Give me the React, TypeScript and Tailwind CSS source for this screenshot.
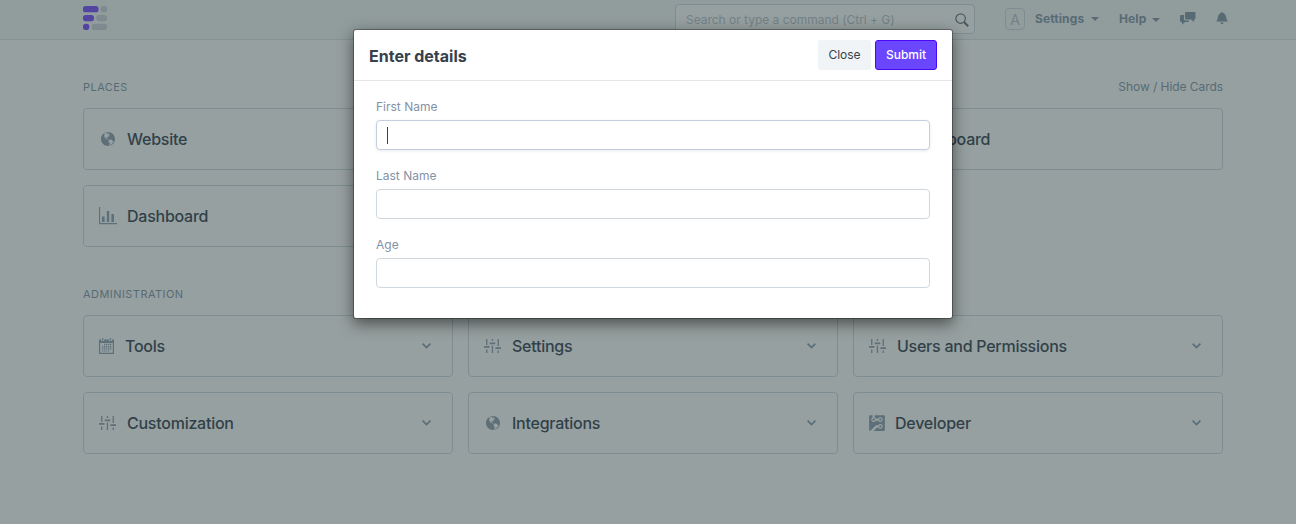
import React from 'react';

type IconProps = { className?: string };

const Globe = ({ className = '' }: IconProps) => (
  <svg className={`ml-[2px] h-4 w-[14px] ${className}`} viewBox="0 0 14 16" fill="currentColor">
    <path d="M7 1C3.14 1 0 4.14 0 8s3.14 7 7 7c.48 0 .94-.05 1.38-.14-.17-.08-.2-.73-.02-1.09.19-.41.81-1.45.2-1.8-.61-.35-.44-.5-.81-.91-.37-.41-.22-.47-.25-.58-.08-.34.36-.89.39-.94.02-.06.02-.27 0-.33 0-.08-.27-.22-.34-.23-.06 0-.11.11-.2.13-.09.02-.5-.25-.59-.33-.09-.08-.14-.23-.27-.34-.13-.13-.14-.03-.33-.11s-.8-.31-1.28-.48c-.48-.19-.52-.47-.52-.66-.02-.2-.3-.47-.42-.67-.14-.2-.16-.47-.2-.41-.04.06.25.78.2.81-.05.02-.16-.2-.3-.38-.14-.19.14-.09-.3-.95s.14-1.3.17-1.75c.03-.45.38.17.19-.13-.19-.3 0-.89-.14-1.11-.13-.22-.88.25-.88.25.02-.22.69-.58 1.16-.92.47-.34.78-.06 1.16.05.39.13.41.09.28-.05-.13-.13.06-.17.36-.13.28.05.38.41.83.36.47-.03.05.09.11.22s-.06.11-.38.3c-.3.2.02.22.55.61s.38-.25.31-.55c-.07-.3.39-.06.39-.06.33.22.27.02.5.08.23.06.91.64.91.64-.83.44-.31.48-.17.59.14.11-.28.3-.28.3-.17-.17-.19.02-.3.08-.11.06-.02.22-.02.22-.56.09-.44.69-.42.83 0 .14-.38.36-.47.58-.09.2.25.64.06.66-.19.03-.34-.66-1.31-.41-.3.08-.94.41-.59 1.08.36.69.92-.19 1.11-.09.19.1-.06.53-.02.55.04.02.53.02.56.61.03.59.77.53.92.55.17 0 .7-.44.77-.45.06-.03.38-.28 1.03.09.66.36.98.31 1.2.47.22.16.08.47.28.58.2.11 1.06-.03 1.28.31.22.34-.88 2.09-1.22 2.28-.34.19-.48.64-.84.92s-.81.64-1.27.91c-.41.23-.47.66-.66.8 3.14-.7 5.48-3.5 5.48-6.84 0-3.86-3.14-7-7-7L7 1z" />
  </svg>
);

const Chart = () => (
  <svg className="h-[18px] w-[18px]" viewBox="0 0 18 18" fill="currentColor">
    <path d="M0 0h1.1v16H18v1.2H0zM3 9.5h2.6V15H3zM7.8 4h2.4v11H7.8zM12.4 7H15v8h-2.6z" />
  </svg>
);

const Calendar = () => (
  <svg className="h-4 w-[15px]" viewBox="0 0 15 16" fill="currentColor">
    <path fillRule="evenodd" d="M0 1.5h2.2V3h3V1.5h4.6V3h3V1.5H15V16H0zM1.2 5v9.8h12.6V5z" />
    <path d="M3 .3h1.4v2H3zM10.6.3H12v2h-1.4z" />
    <path d="M5 5.8h1.3v1.4H5zM7 5.8h1.3v1.4H7zM9 5.8h1.3v1.4H9zM11 5.8h1.3v1.4H11zM3 8h1.3v1.4H3zM5 8h1.3v1.4H5zM7 8h1.3v1.4H7zM9 8h1.3v1.4H9zM11 8h1.3v1.4H11zM3 10.2h1.3v1.4H3zM5 10.2h1.3v1.4H5zM7 10.2h1.3v1.4H7zM9 10.2h1.3v1.4H9zM11 10.2h1.3v1.4H11zM3 12.4h1.3v1.2H3zM5 12.4h1.3v1.2H5zM7 12.4h1.3v1.2H7zM9 12.4h1.3v1.2H9z" />
  </svg>
);

const Sliders = () => (
  <svg className="h-4 w-[17px]" viewBox="0 0 17 16" fill="currentColor">
    <path d="M2.1 1h1.3v6H2.1zM0 8h5.5v1.8H0zM2.1 11.5h1.3V15H2.1zM7.8 1h1.3v2H7.8zM5.7 4.4h5.6v1.8H5.7zM7.8 7.5h1.3V15H7.8zM13.6 1h1.3v7h-1.3zM11.4 9.2H17V11h-5.6zM13.6 12.5h1.3V15h-1.3z" />
  </svg>
);

const Circuit = () => (
  <svg className="h-[18px] w-4" viewBox="0 0 14 16" fill="currentColor">
    <path d="M3 5c0-.55.45-1 1-1s1 .45 1 1-.45 1-1 1-1-.45-1-1zm8 0c0-.55-.45-1-1-1s-1 .45-1 1 .45 1 1 1 1-.45 1-1zm0 6c0-.55-.45-1-1-1s-1 .45-1 1 .45 1 1 1 1-.45 1-1zm2-10H5v2.17c.36.19.64.47.83.83h2.34c.42-.78 1.33-1.28 2.34-1.05.75.19 1.36.8 1.53 1.55.31 1.38-.72 2.59-2.05 2.59-.8 0-1.48-.44-1.83-1.09H5.83c-.42.8-1.33 1.28-2.34 1.03-.73-.17-1.34-.78-1.52-1.52C1.72 4.49 2.2 3.59 3 3.17V1H1c-.55 0-1 .45-1 1v12c0 .55.45 1 1 1l5-5h2.17c.42-.78 1.33-1.28 2.34-1.05.75.19 1.36.8 1.53 1.55.31 1.38-.72 2.59-2.05 2.59-.8 0-1.48-.44-1.83-1.09H6.99L4 15h9c.55 0 1-.45 1-1V2c0-.55-.45-1-1-1z" />
  </svg>
);

const Chevron = () => (
  <svg className="h-[6px] w-[9px]" viewBox="0 0 9 6" fill="none" stroke="currentColor" strokeWidth="1.7">
    <path d="M.6.7 4.5 4.6 8.4.7" />
  </svg>
);

const Caret = () => (
  <svg className="h-1 w-2" viewBox="0 0 8 4" fill="currentColor">
    <path d="M0 0h8L4 4z" />
  </svg>
);

const Logo = () => (
  <svg className="h-6 w-6" viewBox="0 0 24 24">
    <g fill="#7447ff">
      <rect x="0" y="0" width="15.5" height="6.3" rx="2.6" />
      <rect x="0" y="8.9" width="11" height="6.3" rx="2.6" />
      <rect x="0" y="17.7" width="6.3" height="6.3" rx="2.8" />
    </g>
    <g fill="#cbd5de">
      <rect x="17.7" y="0" width="6.3" height="6.3" rx="2.3" />
      <rect x="13.3" y="8.9" width="10.7" height="6.3" rx="2.6" />
      <rect x="8.8" y="17.7" width="15.2" height="6.3" rx="2.6" />
    </g>
  </svg>
);

type CardProps = { icon: React.ReactNode; label: string; offset: string; open?: boolean; className?: string };

const Card = ({ icon, label, offset, open = false, className = '' }: CardProps) => (
  <div className={`flex h-[62px] items-center rounded border border-[#cbd9e0] pr-[21px] pl-[15px] ${className}`}>
    <div className={`flex shrink-0 items-center text-[#8b9cae] ${offset}`}>{icon}</div>
    <div className="flex-1 text-[16px] leading-6 font-medium whitespace-nowrap tracking-[-0.25px] text-[#2f4050]">{label}</div>
    {open && (
      <div className="text-[#8599ac]">
        <Chevron />
      </div>
    )}
  </div>
);

const Field = ({ label, focused = false }: { label: string; focused?: boolean }) => (
  <div className="flex flex-col">
    <label className="mb-1 text-[12px] leading-[18px] text-[#8492a6]">{label}</label>
    <div
      className={`flex h-[30px] items-center rounded border pl-[10px] ${
        focused ? 'border-[#c3cfdf] shadow-[0_1px_3px_0_rgba(50,50,93,0.1)]' : 'border-[#d1d8dd]'
      }`}
    >
      {focused && <span className="h-[17px] w-px bg-[#36414c]" />}
    </div>
  </div>
);

export default function App() {
  return (
    <div className="relative h-[524px] w-[1296px] overflow-hidden bg-white font-['Inter',sans-serif]">
      <header className="flex h-10 items-start border-b border-[#d9e2e4] bg-[#f3f6f8] pl-[83px] text-[#6c7680]">
        <div className="mt-[6px]">
          <Logo />
        </div>
        <div className="mt-1 ml-[568px] flex h-[30px] w-[300px] items-center justify-between rounded border border-[#cbd9e0] bg-white pt-[2px] pr-[5px] pl-[10px]">
          <span className="text-[12px] tracking-[-0.02px] text-[#b4c2cc]">Search or type a command (Ctrl + G)</span>
          <svg className="h-[14px] w-[14px] text-[#62707e]" viewBox="0 0 14 14" fill="none" stroke="currentColor">
            <circle cx="5.6" cy="5.6" r="4.7" strokeWidth="1.2" />
            <path d="m9 9 4.2 4.2" strokeWidth="2" />
          </svg>
        </div>
        <div className="mt-2 ml-[30px] flex h-[22px] w-5 items-center justify-center rounded border border-[#cbd9e0] text-[14px] text-[#b4c2cc]">
          A
        </div>
        <div className="mt-[10px] ml-[10px] flex items-center text-[12px] leading-[18px] font-bold text-[#8094a8]">
          <span className="w-[56px] tracking-[0.1px]">Settings</span>
          <Caret />
          <span className="ml-5 w-[33px] tracking-[0.1px]">Help</span>
          <div className="mt-[2px] flex">
            <Caret />
          </div>
        </div>
        <svg className="mt-3 ml-5 h-[13px] w-4 text-[#8094a8]" viewBox="0 0 16 13" fill="currentColor">
          <path d="M6 0h8.5q1 0 1 1v5.5q0 1-1 1H14V10l-3-2.5H6q-1 0-1-1V1q0-1 1-1z" />
          <path d="M1 3h3v4q0 1.5 1.5 1.5H9v.5q0 1-1 1H5L2 12.8V10H1q-1 0-1-1V4q0-1 1-1z" />
        </svg>
        <svg className="mt-3 ml-5 h-3 w-3 text-[#8094a8]" viewBox="0 1 14 15" fill="currentColor">
          <path d="M14 12v1H0v-1l.73-.58c.77-.77.81-2.55 1.19-4.42C2.69 3.23 6 2 6 2c0-.55.45-1 1-1s1 .45 1 1c0 0 3.39 1.23 4.16 5 .38 1.88.42 3.66 1.19 4.42l.66.58H14zm-7 4c1.11 0 2-.89 2-2H5c0 1.11.89 2 2 2z" />
        </svg>
      </header>

      <main className="flex flex-col pt-[38px] pr-[73px] pl-[83px]">
        <div className="flex h-[18px] items-center justify-between text-[#8094a8]">
          <span className="text-[11px] tracking-[0.45px]">PLACES</span>
          <span className="text-[12px] tracking-[-0.06px]">Show / Hide Cards</span>
        </div>
        <div className="mt-3 grid grid-cols-3 gap-[15px]">
          <Card icon={<Globe />} label="Website" offset="w-7" />
          <Card icon={<Chart />} label="Leaderboard" offset="w-[26px]" className="col-start-3" />
          <Card icon={<Chart />} label="Dashboard" offset="w-7" />
        </div>
        <div className="mt-[38px] flex h-[18px] items-center text-[11px] tracking-[0.45px] text-[#8094a8]">ADMINISTRATION</div>
        <div className="mt-3 grid grid-cols-3 gap-[15px]">
          <Card icon={<Calendar />} label="Tools" offset="w-[26px]" open />
          <Card icon={<Sliders />} label="Settings" offset="w-7" open />
          <Card icon={<Sliders />} label="Users and Permissions" offset="w-7" open />
          <Card icon={<Sliders />} label="Customization" offset="w-7" open />
          <Card icon={<Globe />} label="Integrations" offset="w-7" open />
          <Card icon={<Circuit />} label="Developer" offset="w-[26px]" open />
        </div>
      </main>

      <div className="absolute inset-0 bg-[#2f4141]/50" />

      <div className="absolute inset-0 flex items-start pt-[29px] pl-[353px]">
        <div
          role="dialog"
          className="flex h-[290px] w-[600px] flex-col rounded-[3px] border border-black/30 bg-white bg-clip-padding shadow-[0_5px_15px_rgba(0,0,0,0.5)]"
        >
          <div className="flex h-[51px] items-center border-b border-[#e5e5e5] px-[15px]">
            <h4 className="flex-1 pt-[2px] text-[16px] font-bold text-[#36414c]">Enter details</h4>
            <button className="h-[30px] w-[53px] rounded-[3px] bg-[#f0f4f7] text-[12px] text-[#36414c]">Close</button>
            <button className="ml-1 h-[30px] w-[62px] rounded-[3px] border border-[#4d07f5] bg-[#6b46ff] text-[12px] font-medium text-white">
              Submit
            </button>
          </div>
          <div className="flex flex-col gap-[17px] px-[22px] pt-[17px]">
            <Field label="First Name" focused />
            <Field label="Last Name" />
            <Field label="Age" />
          </div>
        </div>
      </div>
    </div>
  );
}
